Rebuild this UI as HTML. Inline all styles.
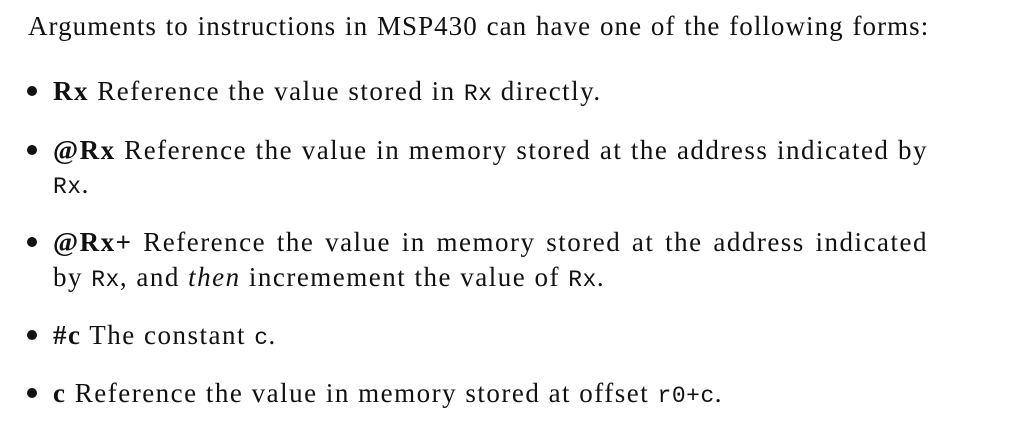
<!DOCTYPE html>
<html><head><style>
body{margin:0;width:1030px;height:437px;background:#fff;position:relative;overflow:hidden;font-family:"Liberation Serif",serif;font-size:27px;color:#111}
.l{position:absolute;line-height:26px;white-space:nowrap;letter-spacing:1.5px}
.j{white-space:normal;text-align:justify;text-align-last:justify}
tt{font-family:"Liberation Mono",monospace;font-size:23px;letter-spacing:0.5px}
.b{position:absolute;width:10px;height:10px;border-radius:50%;background:#111;left:27px}
</style></head><body>
<div class="l" style="left:28px;top:13px;letter-spacing:1.05px;word-spacing:1px">Arguments to instructions in MSP430 can have one of the following forms:</div>

<div class="b" style="top:86px"></div>
<div class="l" style="left:53px;top:78px"><b>Rx</b> Reference the value stored in <tt>Rx</tt> directly.</div>

<div class="b" style="top:145px"></div>
<div class="l j" style="left:53px;top:137px;width:875px"><b>@Rx</b> Reference the value in memory stored at the address indicated by</div>
<div class="l" style="left:53px;top:171px"><tt>Rx</tt>.</div>

<div class="b" style="top:237px"></div>
<div class="l j" style="left:53px;top:229px;width:875px"><b>@Rx+</b> Reference the value in memory stored at the address indicated</div>
<div class="l" style="left:53px;top:264px">by <tt>Rx</tt>, and <i>then</i> incremement the value of <tt>Rx</tt>.</div>

<div class="b" style="top:330px"></div>
<div class="l" style="left:53px;top:322px"><b>#c</b> The constant <tt>c</tt>.</div>

<div class="b" style="top:388px"></div>
<div class="l" style="left:53px;top:380px"><b>c</b> Reference the value in memory stored at offset <tt>r0+c</tt>.</div>
</body></html>
